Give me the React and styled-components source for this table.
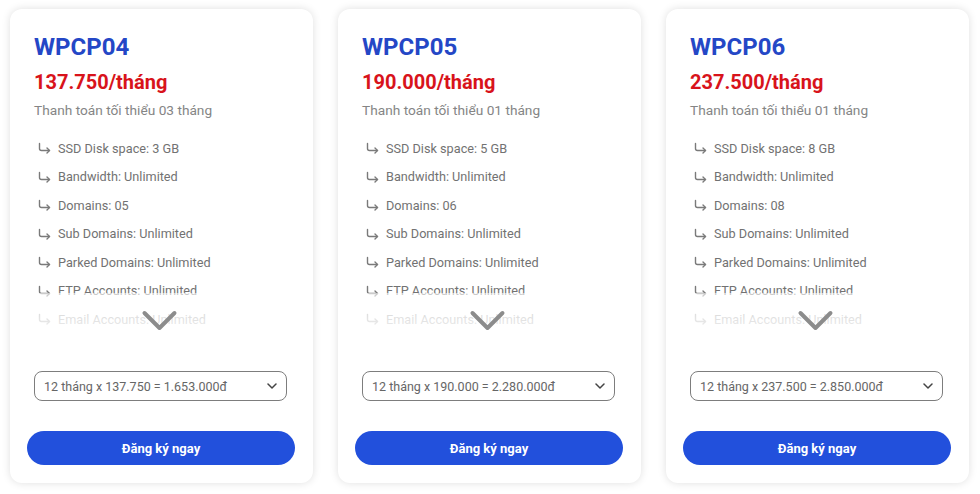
import styled, { createGlobalStyle } from "styled-components";

const GlobalStyle = createGlobalStyle`
  body {
    margin: 0;
    background: #fff;
    font-family: Roboto, "Liberation Sans", Arial, sans-serif;
  }
`;

const Plans = styled.div`
  display: flex;
  gap: 25px;
  padding: 9px 10px;
`;

const Card = styled.div`
  width: 303px;
  height: 474px;
  box-sizing: border-box;
  padding: 24px 24px 18px;
  background: #fff;
  border-radius: 12px;
  box-shadow: 0 0 9px rgba(0, 0, 0, 0.13);
  display: flex;
  flex-direction: column;
`;

const Name = styled.h2`
  margin: 0;
  font-size: 24px;
  line-height: 28px;
  font-weight: 700;
  color: #2447c6;
`;

const Price = styled.div`
  margin-top: 8px;
  font-size: 20px;
  line-height: 26px;
  font-weight: 700;
  color: #d8131b;
`;

const Note = styled.div`
  margin-top: 5px;
  font-size: 13.7px;
  line-height: 20px;
  color: #858585;
`;

const FeatureBox = styled.div`
  position: relative;
  margin-top: 14px;
  height: 200px;
  overflow: hidden;
`;

const FeatureList = styled.ul`
  list-style: none;
  margin: 0;
  padding: 0 0 0 4px;
`;

const Feature = styled.li`
  display: flex;
  align-items: center;
  gap: 7px;
  height: 28.5px;
  font-size: 12.7px;
  color: #727272;
`;

const Fade = styled.div`
  position: absolute;
  left: 0;
  right: 0;
  top: 159px;
  bottom: 0;
  background: linear-gradient(rgba(255, 255, 255, 0.6), rgba(255, 255, 255, 0.9));
`;

const More = styled.svg`
  position: absolute;
  left: 50%;
  top: 176px;
  transform: translateX(-57%);
`;

const Picker = styled.div`
  position: relative;
  margin-top: 37px;
  width: 253px;
  height: 30px;
  box-sizing: border-box;
  border: 1px solid #7d7d7d;
  border-radius: 8px;
  display: flex;
  align-items: center;
  padding: 0 9px;
  font-size: 12.5px;
  color: #666;
`;

const PickerArrow = styled.svg`
  margin-left: auto;
`;

const SignUp = styled.button`
  margin: 30px -6px 0 -7px;
  height: 34px;
  border: none;
  border-radius: 17px;
  background: #2250dc;
  color: #fff;
  font-family: inherit;
  font-size: 13px;
  font-weight: 700;
  cursor: pointer;
`;

const HookArrow = () => (
  <svg width="13" height="12" viewBox="0 0 13 12" fill="none" stroke="#7a7a7a" strokeWidth="1.4" strokeLinecap="round" strokeLinejoin="round">
    <path d="M1.5 1.5 V6.5 Q1.5 8.5 3.5 8.5 H11.5" />
    <path d="M9 6 L11.5 8.5 L9 11" />
  </svg>
);

const plans = [
  { name: "WPCP04", price: "137.750", min: "03", disk: "3 GB", domains: "05", total: "1.653.000" },
  { name: "WPCP05", price: "190.000", min: "01", disk: "5 GB", domains: "06", total: "2.280.000" },
  { name: "WPCP06", price: "237.500", min: "01", disk: "8 GB", domains: "08", total: "2.850.000" },
];

function App() {
  return (
    <>
      <GlobalStyle />
      <Plans>
        {plans.map((p) => (
          <Card key={p.name}>
            <Name>{p.name}</Name>
            <Price>{p.price}/tháng</Price>
            <Note>Thanh toán tối thiểu {p.min} tháng</Note>
            <FeatureBox>
              <FeatureList>
                {[
                  `SSD Disk space: ${p.disk}`,
                  "Bandwidth: Unlimited",
                  `Domains: ${p.domains}`,
                  "Sub Domains: Unlimited",
                  "Parked Domains: Unlimited",
                  "FTP Accounts: Unlimited",
                  "Email Accounts: Unlimited",
                ].map((f) => (
                  <Feature key={f}>
                    <HookArrow />
                    {f}
                  </Feature>
                ))}
              </FeatureList>
              <Fade />
              <More width="36" height="22" viewBox="0 0 36 22" fill="none" stroke="#8c8c8c" strokeWidth="4" strokeLinecap="round" strokeLinejoin="round">
                <path d="M3 3 L18 18 L33 3" />
              </More>
            </FeatureBox>
            <Picker>
              12 tháng x {p.price} = {p.total}đ
              <PickerArrow width="10" height="6" viewBox="0 0 10 6" fill="none" stroke="#444" strokeWidth="1.5" strokeLinecap="round" strokeLinejoin="round">
                <path d="M1 1 L5 5 L9 1" />
              </PickerArrow>
            </Picker>
            <SignUp>Đăng ký ngay</SignUp>
          </Card>
        ))}
      </Plans>
    </>
  );
}

export default App;
